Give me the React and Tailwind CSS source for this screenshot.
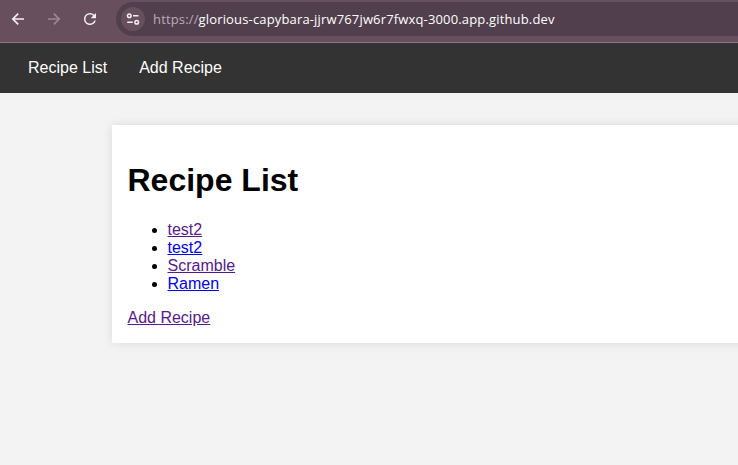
import React from "react";

const recipes = [
  { name: "test2", visited: true },
  { name: "test2", visited: false },
  { name: "Scramble", visited: true },
  { name: "Ramen", visited: false },
];

function BrowserBar() {
  return (
    <div className="flex h-[43px] items-start border-b border-[#8b7581] bg-[#674f5e] pt-[2px]">
      <div className="flex h-[34px] w-[116px] shrink-0 items-center">
        <svg className="ml-[11px]" width="14" height="14" viewBox="0 0 14 14" fill="none" stroke="#f3eff1" strokeWidth="1.7">
          <path d="M13 7H2M7.2 1.6L1.8 7l5.4 5.4" />
        </svg>
        <svg className="ml-[22px]" width="14" height="14" viewBox="0 0 14 14" fill="none" stroke="#9b8693" strokeWidth="1.7">
          <path d="M1 7h11M6.8 1.6L12.2 7l-5.4 5.4" />
        </svg>
        <svg className="ml-5" width="18" height="18" viewBox="0 0 24 24" fill="#f3eff1">
          <path d="M17.65 6.35A7.96 7.96 0 0 0 12 4a8 8 0 1 0 7.73 10h-2.08A6 6 0 1 1 12 6c1.66 0 3.14.69 4.22 1.78L13 11h7V4z" />
        </svg>
      </div>
      <div className="flex h-[34px] flex-1 items-center rounded-l-full bg-[#513f4d] pl-[5px]">
        <div className="flex size-6 shrink-0 items-center justify-center rounded-full bg-[#674f5e]">
          <svg width="14" height="12" viewBox="0 0 14 12" fill="none" stroke="#f3eff1" strokeWidth="1.5">
            <circle cx="3.3" cy="2.8" r="1.8" />
            <path d="M7 2.8h5.5M1.2 9.2h5.6" />
            <circle cx="10.7" cy="9.2" r="1.8" />
          </svg>
        </div>
        <div className="ml-[8px] whitespace-nowrap font-['Open_Sans','Noto_Sans',sans-serif] text-[13px] leading-[18px] tracking-[0.155px] text-white">
          <span className="text-[#b9adb5]">https://</span>glorious-capybara-jjrw767jw6r7fwxq-3000.app.github.dev
        </div>
      </div>
    </div>
  );
}

export default function App() {
  return (
    <div className="h-[465px] w-[738px] overflow-hidden bg-[#f3f3f3] font-['Liberation_Sans',Arial,sans-serif] text-base leading-[18px] text-black">
      <BrowserBar />
      <nav className="flex h-[50px] items-center gap-8 bg-[#333333] pl-7 text-white">
        <a>Recipe List</a>
        <a>Add Recipe</a>
      </nav>
      <main className="mt-8 ml-[111.5px] h-[218px] w-[800px] bg-white p-4 shadow-[0_0_10px_rgba(0,0,0,0.1)]">
        <h1 className="mt-[21px] text-[32px] leading-[37px] font-bold">Recipe List</h1>
        <ul className="mt-[22px] list-disc pl-10">
          {recipes.map((recipe, i) => (
            <li key={i}>
              <a className={recipe.visited ? "text-[#551a8b] underline" : "text-[#0000ee] underline"}>{recipe.name}</a>
            </li>
          ))}
        </ul>
        <a className="mt-4 block w-fit text-[#551a8b] underline">Add Recipe</a>
      </main>
    </div>
  );
}
